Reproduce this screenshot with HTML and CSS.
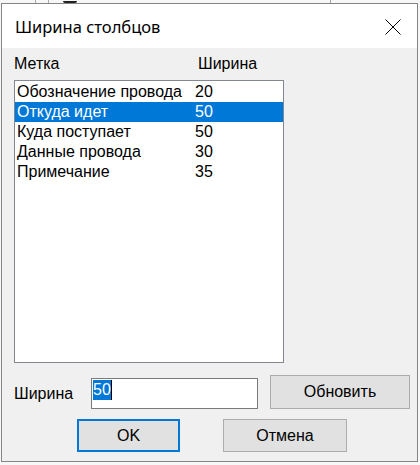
FILE: index.html
```html
<!DOCTYPE html>
<html lang="ru">
<head>
  <meta charset="UTF-8">
  <title>Ширина столбцов</title>
  <link rel="stylesheet" href="styles.css">
</head>
<body>
  <div class="backdrop">
    <span class="vline"></span>
    <span class="vline second"></span>
    <span class="radio"></span>
    <span class="vline third"></span>
  </div>

  <div class="dialog">
    <div class="titlebar">
      <span class="title">Ширина столбцов</span>
      <svg class="close" width="16" height="16" viewBox="0 0 16 16">
        <path d="M0.5 0.5 L15.5 15.5 M15.5 0.5 L0.5 15.5" stroke="#000" stroke-width="1" fill="none"/>
      </svg>
    </div>

    <div class="content">
      <div class="headers">
        <span class="col-name">Метка</span>
        <span>Ширина</span>
      </div>

      <div class="listbox">
        <div class="row"><span class="name">Обозначение провода</span><span>20</span></div>
        <div class="row selected"><span class="name">Откуда идет</span><span>50</span></div>
        <div class="row"><span class="name">Куда поступает</span><span>50</span></div>
        <div class="row"><span class="name">Данные провода</span><span>30</span></div>
        <div class="row"><span class="name">Примечание</span><span>35</span></div>
      </div>

      <div class="edit-row">
        <span class="edit-label">Ширина</span>
        <div class="textbox"><span class="selection">50</span><span class="caret"></span></div>
        <button class="btn update">Обновить</button>
      </div>

      <div class="buttons">
        <button class="btn ok">OK</button>
        <button class="btn cancel">Отмена</button>
      </div>
    </div>
  </div>
</body>
</html>
```

FILE: styles.css
```css
body {
  margin: 0;
  background: #f7f7f7;
  font-family: 'Liberation Sans', Arial, sans-serif;
  font-size: 16px;
  color: #000;
  width: 420px;
  height: 465px;
  overflow: hidden;
}

/* window behind the dialog, only its bottom edge shows */
.backdrop {
  height: 3px;
  display: flex;
  align-items: flex-end;
}

.vline {
  width: 1px;
  height: 3px;
  background: #aaa;
  margin-left: 35px;
}

.vline.second {
  margin-left: 12px;
}

.vline.third {
  margin-left: 253px;
}

.radio {
  width: 14px;
  height: 2px;
  border-radius: 0 0 7px 7px;
  background: #222;
  margin-left: 14px;
}

.dialog {
  margin-left: 1px;
  width: 415px;
  height: 457px;
  border: 1px solid #858585;
  background: #f0f0f0;
  display: flex;
  flex-direction: column;
}

.titlebar {
  height: 44px;
  background: #fff;
  display: flex;
  align-items: center;
  justify-content: space-between;
  padding: 0 16px 0 13px;
}

.title {
  font-family: 'Noto Sans', 'Open Sans', sans-serif;
  font-size: 16.5px;
  line-height: 20px;
  margin-top: 2px;
}

.close {
  display: block;
  margin-top: 1px;
}

.content {
  padding: 0 0 0 12px;
}

.headers {
  display: flex;
  margin-top: 6px;
  line-height: 20px;
}

.col-name {
  width: 184px;
}

.listbox {
  margin-top: 6px;
  width: 268px;
  height: 279px;
  padding: 1px 0;
  border: 1px solid #828790;
  background: #fff;
}

.row {
  display: flex;
  height: 20px;
  line-height: 20px;
  padding-left: 2px;
}

.row .name {
  width: 178px;
}

.row.selected {
  background: #0078d7;
  color: #fff;
}

.edit-row {
  display: flex;
  align-items: flex-end;
  margin-top: 12px;
}

.edit-label {
  width: 77px;
  line-height: 30px;
}

.textbox {
  width: 164px;
  height: 28px;
  border: 1px solid #7a7a7a;
  background: #fff;
  display: flex;
  align-items: flex-start;
  padding: 1px 0 0 1px;
}

.selection {
  background: #0078d7;
  color: #fff;
  line-height: 20px;
}

.caret {
  width: 1px;
  height: 20px;
  background: #000;
}

.btn {
  font-family: 'Liberation Sans', Arial, sans-serif;
  font-size: 16px;
  color: #000;
  background: #e1e1e1;
  border: 1px solid #adadad;
  height: 33px;
  padding: 0;
}

.update {
  width: 140px;
  height: 34px;
  margin-left: 12px;
}

.buttons {
  display: flex;
  margin-top: 10px;
  padding-left: 63px;
}

.ok {
  width: 103px;
  border: 2px solid #0078d7;
}

.cancel {
  width: 124px;
  margin-left: 43px;
}
```
